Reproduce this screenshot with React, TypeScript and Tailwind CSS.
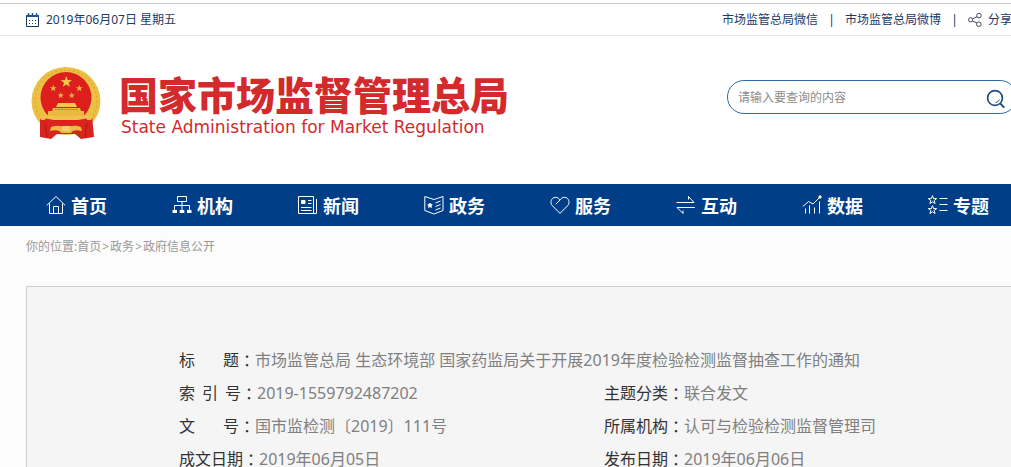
import React from "react";

const starPoints = (cx: number, cy: number, r: number): string =>
  Array.from({ length: 10 }, (_, i) => {
    const radius = i % 2 === 0 ? r : r * 0.4;
    const angle = (Math.PI / 5) * i - Math.PI / 2;
    return `${(cx + radius * Math.cos(angle)).toFixed(2)},${(cy + radius * Math.sin(angle)).toFixed(2)}`;
  }).join(" ");

function Emblem() {
  return (
    <svg viewBox="0 0 72 74" className="h-[74px] w-[72px] shrink-0" aria-hidden="true">
      <ellipse cx="35" cy="35" rx="34.5" ry="34" fill="#ecc044" />
      <ellipse cx="35" cy="35" rx="31" ry="31" fill="none" stroke="#dda532" strokeWidth="1.2" strokeDasharray="2 2.5" />
      <path d="M9 50 L61 50 L63 71 L50 73 L44 68 L26 68 L20 73 L9 71 Z" fill="#d8231f" />
      <circle cx="35" cy="31.5" r="25.5" fill="#dc1f1c" />
      <polygon points={starPoints(35.3, 16, 6)} fill="#f4c84a" />
      <polygon points={starPoints(22.3, 22.3, 3.6)} fill="#f0b545" />
      <polygon points={starPoints(29.7, 29.5, 3.4)} fill="#f0b545" />
      <polygon points={starPoints(40.7, 29.5, 3.4)} fill="#f0b545" />
      <polygon points={starPoints(48.3, 22.3, 3.6)} fill="#f0b545" />
      <path d="M27 37 H44 L46 41 H25 Z" fill="#f1c650" />
      <path d="M22 42 H49 L50 45 H53 V50 H17 V45 H21 Z" fill="#ecb940" />
      <path d="M24 43.5 H47" stroke="#d6812a" strokeWidth="0.8" />
      <path d="M8 50 H62 L60 54 H10 Z" fill="#f0c24a" />
      <path d="M14 54 Q35 59 56 54" fill="none" stroke="#d8231f" strokeWidth="3" />
      <path d="M20 61 Q28 58 35 62 Q42 58 50 61 L51 65 Q42 63 40 67 H30 Q28 63 19 65 Z" fill="#efba42" />
      <path d="M31 60 H39 V65 H31 Z" fill="#f4cf63" />
      <path d="M14 57 L16 71 M56 57 L54 71" stroke="#b81815" strokeWidth="1.2" />
    </svg>
  );
}

function CalendarIcon() {
  return (
    <svg viewBox="0 0 14 14" className="h-3.5 w-3.5" fill="none" stroke="#17335f" aria-hidden="true">
      <path d="M0.5 2.5 H12.5 V13.5 H0.5 Z" />
      <path d="M0 3 H13" stroke="#1d5299" strokeWidth="2" />
      <path d="M2.5 0 V4 M6.5 0 V4 M10.5 0 V4" stroke="#1d5299" strokeWidth="1.4" />
      <path d="M3 7.5 H10.5 M3 10.5 H10.5" strokeDasharray="1 2" />
    </svg>
  );
}

function ShareIcon() {
  return (
    <svg viewBox="0 0 14 14" className="h-3.5 w-3.5" fill="none" stroke="#444b59" aria-hidden="true">
      <circle cx="2.6" cy="6.8" r="2.1" />
      <circle cx="11" cy="2.6" r="2.3" />
      <circle cx="10.8" cy="11.2" r="2.3" />
      <path d="M4.5 5.9 L9.1 3.6 M4.4 7.9 L9 10.2" />
    </svg>
  );
}

function SearchIcon() {
  return (
    <svg viewBox="0 0 20 20" className="h-5 w-5" fill="none" stroke="#1d4b86" aria-hidden="true">
      <circle cx="9" cy="9" r="7.4" strokeWidth="1.7" />
      <path d="M14.4 14.6 L18.3 18.6" strokeWidth="2" />
      <path d="M9.5 13.6 Q12.6 13 13.4 10.5" strokeWidth="0.9" />
    </svg>
  );
}

type NavItem = { label: string; icon: React.ReactNode };

const navItems: NavItem[] = [
  {
    label: "首页",
    icon: <path d="M0.7 10.5 L10 1.5 L19.3 10.5 M3.5 8.5 V18.5 H16.5 V8.5 M7.5 18 V11.5 H12.5 V18" />,
  },
  {
    label: "机构",
    icon: (
      <>
        <path d="M5.5 1.5 H14.5 V6.5 H5.5 Z M10 6.5 V15 M2.5 15 V10.5 H17.5 V15" />
        <path d="M0.5 16.5 H5 M7.7 16.5 H12.3 M15 16.5 H19.5" strokeWidth="3" />
      </>
    ),
  },
  {
    label: "新闻",
    icon: (
      <>
        <path d="M0.5 1.5 H15.5 V18.5 H0.5 Z M18.5 4 V18.5 H15.5 M10 5.5 H13.5 M10 8.5 H13.5 M3 12.5 H13.5 M3 15.5 H13.5" />
        <path d="M3.5 5.5 H7 V8.5 H3.5 Z" fill="currentColor" />
      </>
    ),
  },
  {
    label: "政务",
    icon: (
      <>
        <path d="M0.8 1.5 L10 4.5 L19 1.5 V15.5 L10 19 L0.8 15.5 Z M11.5 8 L16.5 6 M11.5 11.5 L16.5 9.5 M11.5 15 L16.5 13" />
        <polygon points={starPoints(6, 10.5, 2.4)} fill="currentColor" />
      </>
    ),
  },
  {
    label: "服务",
    icon: <path d="M10 18.3 L2.2 10.6 C-0.3 7.7 1.2 2.6 5.3 2.3 C7.8 2.2 9.2 3.8 10 5 C10.8 3.8 12.3 2.2 14.8 2.3 C18.8 2.6 20.3 7.7 17.8 10.6 Z M10 5 L5.8 9.2" />,
  },
  {
    label: "互动",
    icon: <path d="M0.5 7.5 H18 L12.5 1.5 V4.5 M18.8 12.5 H1 L7 18.5 V15.5" />,
  },
  {
    label: "数据",
    icon: (
      <>
        <path d="M0.8 11.5 L6.5 6.5 L11 9 L18 2" />
        <circle cx="18" cy="2" r="1.2" fill="currentColor" />
        <path d="M3.5 18.5 V13.5 M7.5 18.5 V10.5 M12.5 18.5 V12.5 M17.5 18.5 V6.5" />
      </>
    ),
  },
  {
    label: "专题",
    icon: (
      <>
        <polygon points={starPoints(4.5, 5, 4.4)} />
        <polygon points={starPoints(4.5, 15, 4.4)} />
        <path d="M11.5 3.5 H19.5 M11.5 9.5 H19.5 M11.5 15.5 H19.5" />
      </>
    ),
  },
];

function Label({ text, width }: { text: string; width: string }) {
  return (
    <dt className="flex text-[#333333]">
      <span className={`flex justify-between ${width}`}>
        {[...text].map((char, i) => (
          <span key={i}>{char}</span>
        ))}
      </span>
      <span className="[font-family:'Noto_Sans_CJK_TC',sans-serif]">：</span>
    </dt>
  );
}

function Field({ label, value, width = "w-16" }: { label: string; value: string; width?: string }) {
  return (
    <div className="flex whitespace-nowrap">
      <Label text={label} width={width} />
      <dd className="text-[#808080]">{value}</dd>
    </div>
  );
}

export default function App() {
  return (
    <div className="h-screen overflow-hidden bg-[#fcfcfc] [font-family:'Noto_Sans','Noto_Sans_CJK_SC',sans-serif]">
      <div className="min-w-[1017px]">
        <header className="bg-white pt-[3px]">
          <div className="flex h-[33px] items-center justify-between border-t border-b border-t-[#c6c8cc] border-b-[#e8e8e8] pr-[5px] pl-[26px] text-xs text-[#1c3a68]">
            <div className="flex items-center gap-1.5">
              <CalendarIcon />
              <time dateTime="2019-06-07">2019年06月07日 星期五</time>
            </div>
            <div className="flex items-center">
              <a href="#wechat">市场监管总局微信</a>
              <span className="w-[27px] text-center">|</span>
              <a href="#weibo">市场监管总局微博</a>
              <span className="w-[27px] text-center">|</span>
              <a href="#share" className="flex items-center gap-1.5">
                <ShareIcon />
                分享
              </a>
            </div>
          </div>
          <div className="flex h-[148px] items-start justify-between pt-[30px] pl-[31px]">
            <a href="#home" className="flex items-start gap-4">
              <Emblem />
              <span className="flex flex-col gap-[5px] pt-2 text-[#d32a2c]">
                <span className="text-[39px] leading-[38px] font-black [font-family:'Noto_Sans_CJK_SC',sans-serif]">
                  国家市场监督管理总局
                </span>
                <span className="pl-0.5 text-[17px] leading-5 [font-family:'DejaVu_Sans',sans-serif]">
                  State Administration for Market Regulation
                </span>
              </span>
            </a>
            <form
              className="mt-3.5 flex h-[34px] w-[290px] items-center rounded-full border border-[#2d6ca0] pr-2.5 pl-2.5"
              onSubmit={(e) => e.preventDefault()}
            >
              <input
                type="text"
                aria-label="搜索"
                placeholder="请输入要查询的内容"
                className="min-w-0 flex-1 bg-transparent pt-0.5 text-xs outline-none placeholder:text-[#8c8c8c]"
              />
              <button type="submit" aria-label="查询" className="mt-1">
                <SearchIcon />
              </button>
            </form>
          </div>
        </header>

        <nav className="flex h-[42px] items-center bg-[#003e87] pl-[46px] text-white">
          {navItems.map((item) => (
            <a
              key={item.label}
              href={`#${item.label}`}
              className="flex w-[126px] shrink-0 items-center gap-[5px] text-lg font-bold"
            >
              <svg viewBox="0 0 20 20" className="h-5 w-5" fill="none" stroke="currentColor" strokeWidth="1" aria-hidden="true">
                {item.icon}
              </svg>
              <span className="pt-0.5">{item.label}</span>
            </a>
          ))}
        </nav>

        <main className="pl-[26px]">
          <div className="flex h-[60px] items-start pt-[13px] text-xs leading-4 text-[#999999]">
            <span>你的位置:</span>
            <a href="#home">首页</a>
            <span className="px-px">&gt;</span>
            <a href="#affairs">政务</a>
            <span className="px-px">&gt;</span>
            <a href="#open">政府信息公开</a>
          </div>
          <section className="border-t border-l border-[#cfcfcf] bg-[#f5f5f5] pt-[57px] pb-14 pl-[152px]">
            <dl className="grid grid-cols-[425px_1fr] text-base leading-[33px]">
              <div className="col-span-2">
                <Field label="标题" width="w-[60px]" value="市场监管总局 生态环境部 国家药监局关于开展2019年度检验检测监督抽查工作的通知" />
              </div>
              <Field label="索引号" width="w-[62px]" value="2019-1559792487202" />
              <Field label="主题分类" value="联合发文" />
              <Field label="文号" width="w-[60px]" value="国市监检测〔2019〕111号" />
              <Field label="所属机构" value="认可与检验检测监督管理司" />
              <Field label="成文日期" value="2019年06月05日" />
              <Field label="发布日期" value="2019年06月06日" />
            </dl>
          </section>
        </main>
      </div>
    </div>
  );
}
